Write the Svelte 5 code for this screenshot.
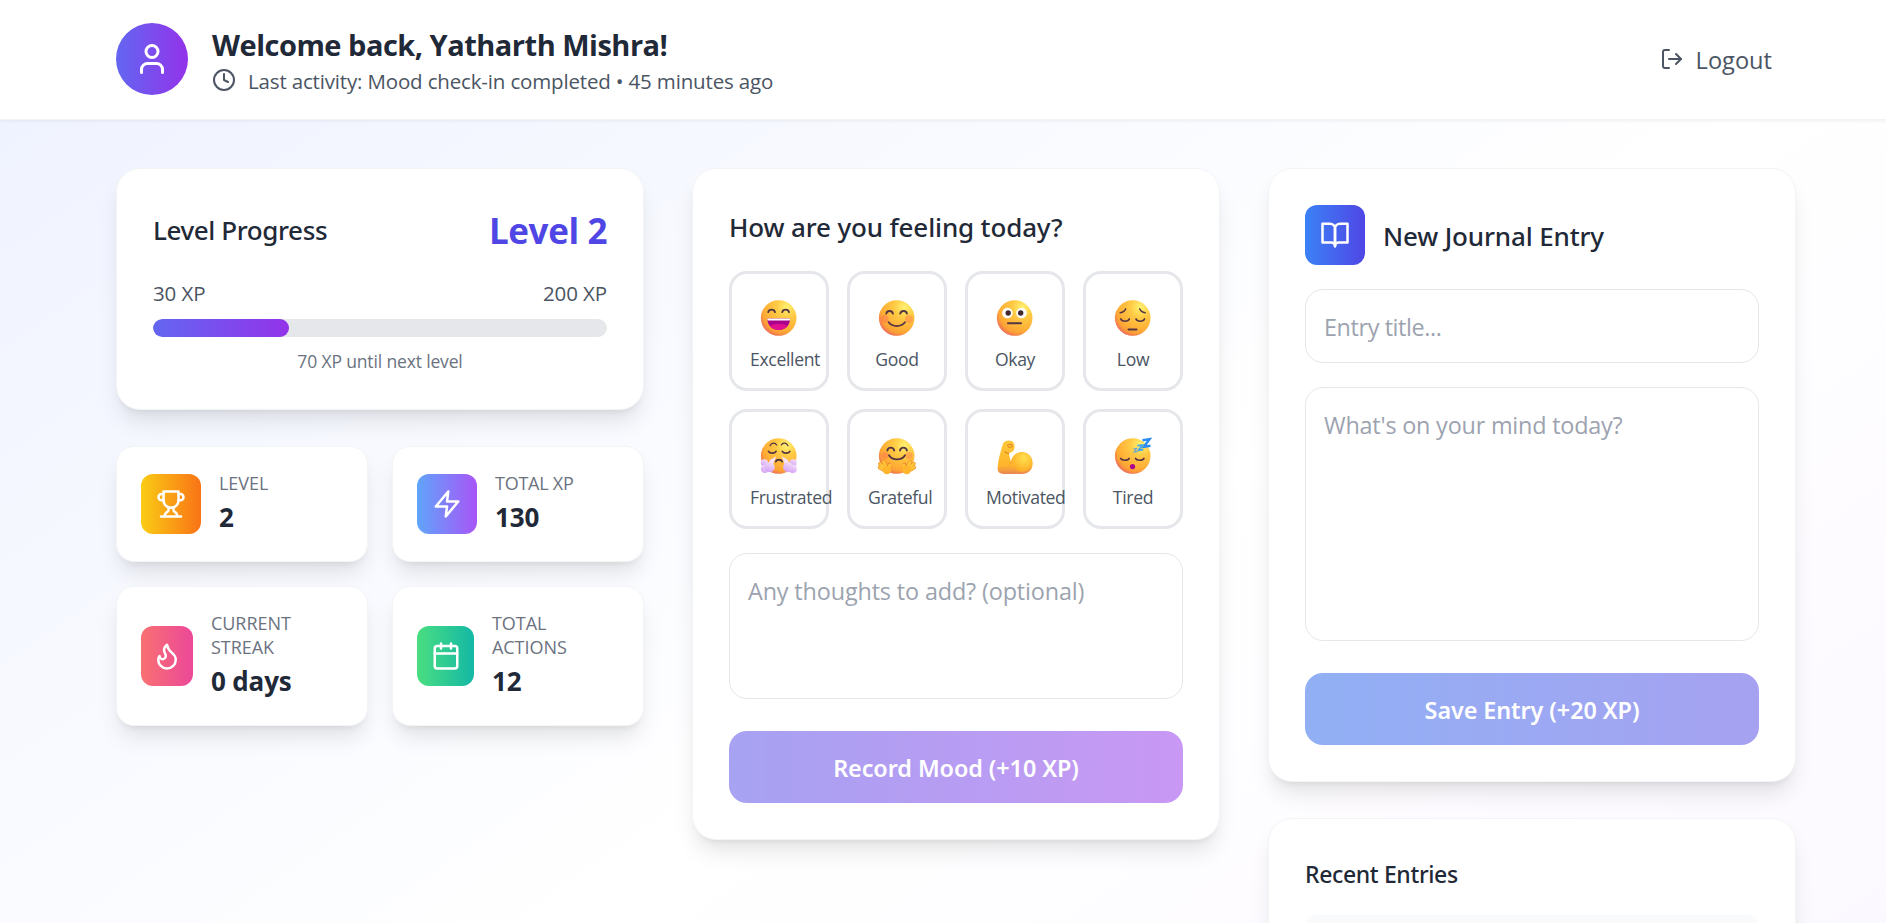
<script>
  const xp = { current: 30, total: 200, remaining: 70, percent: 30 };

  const stats = [
    { key: 'level', label: 'Level', value: '2' },
    { key: 'xp', label: 'Total XP', value: '130' },
    { key: 'streak', label: 'Current Streak', value: '0 days' },
    { key: 'actions', label: 'Total Actions', value: '12' }
  ];

  const moods = ['Excellent', 'Good', 'Okay', 'Low', 'Frustrated', 'Grateful', 'Motivated', 'Tired'];
</script>

{#snippet face()}
  <circle cx="17.7" cy="18" r="17.8" fill="url(#skin)" />
  <circle cx="17.7" cy="18" r="17.8" fill="url(#blush)" />
{/snippet}

{#snippet emoji(name)}
  <svg class="emoji" viewBox="0 0 36 36" fill="none" stroke-linecap="round" stroke-linejoin="round">
    {#if name === 'Excellent'}
      {@render face()}
      <path d="M7.2 12.2c.8-3.4 6-3.4 6.8 0M21.2 12.2c.8-3.4 6-3.4 6.8 0" stroke="#533544" stroke-width="1.8" />
      <path d="M6.3 18.5h22.8c0 15.4-22.8 15.4-22.8 0z" fill="#a8008c" />
      <path d="M9 26c4-3 13-3 17.3 0-4 5.2-13.3 5.2-17.3 0z" fill="#e0108f" />
      <path d="M6.3 18.5h22.8l-.3 2H6.6z" fill="#fff" />
    {:else if name === 'Good'}
      {@render face()}
      <circle cx="5.5" cy="19" r="4" fill="#ff6a56" opacity=".4" />
      <circle cx="30" cy="19" r="4" fill="#ff6a56" opacity=".35" />
      <path d="M7.2 13.7c.8-3.6 6-3.6 6.8 0M21.2 13.7c.8-3.6 6-3.6 6.8 0" stroke="#533544" stroke-width="1.8" />
      <path d="M9.6 22.3c3.6 5 12.7 5 16.4 0" stroke="#533544" stroke-width="1.8" />
    {:else if name === 'Okay'}
      {@render face()}
      <circle cx="10.4" cy="13" r="5.3" fill="#fff" />
      <circle cx="24.5" cy="13" r="5.3" fill="#fff" />
      <circle cx="11.2" cy="13" r="2.7" fill="#402a32" />
      <circle cx="23.7" cy="13" r="2.7" fill="#402a32" />
      <path d="M11 23.3h13" stroke="#533544" stroke-width="2.1" />
    {:else if name === 'Low'}
      {@render face()}
      <path d="M5.2 12.8c2.6-.4 4.8-2 5.5-4M30.2 12.8c-2.6-.4-4.8-2-5.5-4" stroke="#533544" stroke-width="1.4" />
      <path d="M5.8 19c1.2 3 7.3 3 8.5 0M21 19c1.2 3 7.3 3 8.5 0" stroke="#533544" stroke-width="1.7" />
      <path d="M13.5 29.6h8" stroke="#533544" stroke-width="2" />
    {:else if name === 'Frustrated'}
      {@render face()}
      <path d="M9 7.8c1.2-3 5-3.7 6.7-.8M27 7.8c-1.2-3-5-3.7-6.7-.8" stroke="#533544" stroke-width="1.2" />
      <path d="M7.5 13.3c1.2 2.5 6.4 2.5 7.5 0M21.3 13.3c1.2 2.5 6.4 2.5 7.5 0" stroke="#533544" stroke-width="1.7" />
      <path d="M14.8 23.5c.8-2.4 5.4-2.4 6.3 0" stroke="#533544" stroke-width="2" />
      <path d="M15.2 18.3l-6.5 4-1 6 4-1z" fill="#f7e2fd" />
      <path d="M20.7 18.3l6.500 4 1 6-4-1z" fill="#f7e2fd" />
      <g fill="url(#steam)">
        <circle cx="3.4" cy="24.8" r="3.6" /><circle cx="4" cy="30.9" r="4.2" /><circle cx="8.7" cy="29.2" r="5" />
        <circle cx="32.2" cy="24.8" r="3.6" /><circle cx="31.8" cy="30.9" r="4.100" /><circle cx="27.1" cy="29.2" r="5" />
      </g>
    {:else if name === 'Grateful'}
      {@render face()}
      <circle cx="6" cy="17.5" r="3.5" fill="#ff6a56" opacity=".4" />
      <circle cx="30" cy="17.5" r="3.5" fill="#ff6a56" opacity=".35" />
      <path d="M8.3 12.5c.8-3.8 6-3.8 6.900 0M21 12.500c.8-3.800 6-3.800 6.900 0" stroke="#533544" stroke-width="1.900" />
      <path d="M10 17.200c3.500 5.600 12.500 5.600 16 0" stroke="#533544" stroke-width="1.900" />
      <g stroke="#e98a2b" stroke-width="3.800"><path d="M6.500 31L1 25.800M7.500 30L4.500 23.700M9.500 31l.7-4.500M7 33l-6.300-3.500M29.300 31l5.500-5.200M28.300 30l3-6.300M26.300 31l-.7-4.500M28.800 33l6.300-3.500" /></g>
      <g stroke="#ffc238" stroke-width="2.800"><path d="M6.500 31L1 25.800M7.500 30L4.500 23.700M9.500 31l1.300-4M7 33l-6.300-3.500M29.300 31l5.500-5.200M28.300 30l3-6.300M26.300 31l-1.300-4M28.800 33l6.300-3.500" /></g>
      <circle cx="8" cy="32" r="4.300" fill="#ffb52e" /><circle cx="27.800" cy="32" r="4.300" fill="#ffb52e" />
    {:else if name === 'Motivated'}
      <path d="M6 5.500c2-3.500 8.500-4 10.700-.5 2 3 .8 8-2.500 9.300l-2.400 1 2 8.200c1.500-6.200 6-9.300 11.200-9.300 6.500 0 10.700 4.700 10.700 11 0 6.500-4.200 10.800-11.200 10.800H6.500C2.600 36 .4 33.800.6 29.800 1 22 3.700 13.300 6 5.500z" fill="url(#arm)" />
      <circle cx="25" cy="24" r="9.900" fill="url(#bicep)" />
      <path d="M11.800 15.300c-1.500.2-3-.6-3.800-1.700M10.500 7.600c1.700-2 4.500-1.700 4.700.1.100 1.500-2 2-3.800 1.200" stroke="#df8621" stroke-width="1.100" />
      <path d="M14 23.500c-1 3-1.500 5-4 7" stroke="#ed9a2a" stroke-width="1" opacity=".6" />
    {:else}
      {@render face()}
      <path d="M5.700 20.400c1.200 2.400 7.400 2.400 8.500 0M20.500 20.400c1.200 2.400 7.400 2.400 8.500 0" stroke="#533544" stroke-width="1.600" />
      <circle cx="17.500" cy="28.600" r="2.600" fill="#ad0090" />
      <g stroke="#2b8df2" stroke-linecap="butt" stroke-linejoin="miter">
        <path d="M27.500 2.200l7-1-5.500 7.500 6.500-1" stroke-width="2.500" />
        <path d="M22.300 7.700l5-.6-3.800 5.200 4.800-.6" stroke-width="1.800" stroke="#3fa5ef" />
        <path d="M18.300 10.900l3.300-.3-2.400 3.300 3.200-.3" stroke-width="1.300" stroke="#6fa9c9" />
      </g>
    {/if}
  </svg>
{/snippet}

<svg class="defs" width="0" height="0" aria-hidden="true">
  <defs>
    <radialGradient id="skin" cx=".72" cy=".2" r=".95">
      <stop offset="0" stop-color="#fff272" /><stop offset=".3" stop-color="#ffcb45" /><stop offset=".65" stop-color="#ffaf36" /><stop offset="1" stop-color="#f58a35" />
    </radialGradient>
    <radialGradient id="blush" cx=".6" cy=".38" r=".7">
      <stop offset=".76" stop-color="#f4615d" stop-opacity="0" /><stop offset="1" stop-color="#e0568e" stop-opacity=".85" />
    </radialGradient>
    <linearGradient id="steam" x1=".7" y1="0" x2=".3" y2="1">
      <stop offset="0" stop-color="#f3dffb" /><stop offset="1" stop-color="#d4a0f4" />
    </linearGradient>
    <linearGradient id="arm" x1=".5" y1="0" x2=".5" y2="1">
      <stop offset="0" stop-color="#ffc83a" /><stop offset=".75" stop-color="#ffb52c" /><stop offset="1" stop-color="#e98552" />
    </linearGradient>
    <radialGradient id="bicep" cx=".6" cy=".3" r=".75">
      <stop offset="0" stop-color="#ffe04f" /><stop offset=".7" stop-color="#ffb92f" /><stop offset="1" stop-color="#f9a62e" />
    </radialGradient>
  </defs>
</svg>

<div class="page">
  <header>
    <div class="user">
      <div class="avatar">
        <svg class="icon" width="36" height="36" viewBox="0 0 24 24"><path d="M19 21v-2a4 4 0 0 0-4-4H9a4 4 0 0 0-4 4v2" /><circle cx="12" cy="7" r="4" /></svg>
      </div>
      <div>
        <h1>Welcome back, Yatharth Mishra!</h1>
        <div class="activity">
          <svg class="icon" width="24" height="24" viewBox="0 0 24 24"><circle cx="12" cy="12" r="10" /><polyline points="12 6 12 12 16 14" /></svg>
          <span>Last activity: Mood check-in completed • 45 minutes ago</span>
        </div>
      </div>
    </div>
    <button class="logout">
      <svg class="icon" width="24" height="24" viewBox="0 0 24 24"><path d="M9 21H5a2 2 0 0 1-2-2V5a2 2 0 0 1 2-2h4" /><polyline points="16 17 21 12 16 7" /><line x1="21" y1="12" x2="9" y2="12" /></svg>
      <span>Logout</span>
    </button>
  </header>

  <main>
    <div class="column">
      <section class="card">
        <div class="between level-row">
          <h2>Level Progress</h2>
          <strong>Level 2</strong>
        </div>
        <div class="between xp-row"><span>{xp.current} XP</span><span>{xp.total} XP</span></div>
        <div class="bar"><div class="fill" style="width: {xp.percent}%"></div></div>
        <p class="hint">{xp.remaining} XP until next level</p>
      </section>

      <div class="stats">
        {#each stats as stat}
          <section class="stat">
            <div class="tile {stat.key}">
              <svg class="icon" width="30" height="30" viewBox="0 0 24 24">
                {#if stat.key === 'level'}
                  <path d="M6 9H4.500a2.500 2.500 0 0 1 0-5H6" /><path d="M18 9h1.500a2.500 2.500 0 0 0 0-5H18" /><path d="M4 22h16" />
                  <path d="M10 14.660V17c0 .55-.47.98-.97 1.210C7.850 18.750 7 20.240 7 22" /><path d="M14 14.660V17c0 .55.47.98.97 1.210C16.150 18.750 17 20.240 17 22" />
                  <path d="M18 2H6v7a6 6 0 0 0 12 0V2Z" />
                {:else if stat.key === 'xp'}
                  <polygon points="13 2 3 14 12 14 11 22 21 10 12 10 13 2" />
                {:else if stat.key === 'streak'}
                  <path d="M8.500 14.500A2.500 2.500 0 0 0 11 12c0-1.380-.5-2-1-3-1.072-2.143-.224-4.054 2-6 .5 2.500 2 4.900 4 6.500 2 1.600 3 3.500 3 5.500a7 7 0 1 1-14 0c0-1.153.433-2.294 1-3a2.500 2.500 0 0 0 2.500 2.500z" />
                {:else}
                  <rect x="3" y="4" width="18" height="18" rx="2" /><path d="M16 2v4M8 2v4M3 10h18" />
                {/if}
              </svg>
            </div>
            <div>
              <div class="stat-label">{stat.label}</div>
              <div class="stat-value">{stat.value}</div>
            </div>
          </section>
        {/each}
      </div>
    </div>

    <div class="column">
      <section class="card">
        <h2>How are you feeling today?</h2>
        <div class="moods">
          {#each moods as mood}
            <button class="mood">
              {@render emoji(mood)}
              <span>{mood}</span>
            </button>
          {/each}
        </div>
        <textarea class="thoughts" placeholder="Any thoughts to add? (optional)"></textarea>
        <button class="action record">Record Mood (+10 XP)</button>
      </section>
    </div>

    <div class="column">
      <section class="card">
        <div class="journal-head">
          <div class="tile book">
            <svg class="icon" width="30" height="30" viewBox="0 0 24 24"><path d="M2 3h6a4 4 0 0 1 4 4v14a3 3 0 0 0-3-3H2z" /><path d="M22 3h-6a4 4 0 0 0-4 4v14a3 3 0 0 1 3-3h7z" /></svg>
          </div>
          <h2>New Journal Entry</h2>
        </div>
        <input placeholder="Entry title..." />
        <textarea class="body" placeholder="What's on your mind today?"></textarea>
        <button class="action save">Save Entry (+20 XP)</button>
      </section>
      <section class="card">
        <h3>Recent Entries</h3>
        <div class="entry"></div>
      </section>
    </div>
  </main>
</div>

<style>
  :global(body) {
    overflow: hidden;
  }
  * {
    box-sizing: border-box;
  }
  .defs {
    display: block;
    height: 0;
  }
  .page {
    width: 1911px;
    height: 1330px;
    margin-bottom: -407px;
    background: linear-gradient(to bottom right, #eef2ff, #ffffff 50%, #faf5ff);
    font-family: 'Open Sans', 'Noto Sans', sans-serif;
    color: #1f2937;
  }
  :global(#app) {
    height: 923px;
    overflow: hidden;
  }
  h1, h2, h3, p {
    margin: 0;
  }
  button {
    font: inherit;
    color: inherit;
    background: none;
    border: 0;
    padding: 0;
  }
  .icon {
    flex: none;
    display: block;
    fill: none;
    stroke: currentColor;
    stroke-width: 2;
    stroke-linecap: round;
    stroke-linejoin: round;
  }
  header {
    display: flex;
    justify-content: space-between;
    align-items: center;
    height: 120px;
    padding: 0 116px 1px;
    background: #fff;
    border-bottom: 1px solid #f3f4f6;
    box-shadow: 0 1.5px 3px rgba(0, 0, 0, 0.05);
  }
  .user {
    display: flex;
    gap: 24px;
  }
  .avatar {
    width: 72px;
    height: 72px;
    border-radius: 50%;
    display: grid;
    place-items: center;
    color: #fff;
    background: linear-gradient(to right, #6366f1, #9333ea);
  }
  h1 {
    padding-top: 1px;
    font-size: 29px;
    line-height: 42px;
    font-weight: 700;
    letter-spacing: -0.5px;
  }
  .activity {
    display: flex;
    align-items: center;
    gap: 12px;
    height: 30px;
    margin-top: -1px;
    color: #4b5563;
    font-size: 20.5px;
    letter-spacing: -0.16px;
  }
  .activity span {
    padding-top: 2px;
  }
  .logout {
    display: flex;
    align-items: center;
    gap: 12px;
    padding-right: 23px;
    color: #4b5563;
    font-size: 23.6px;
    line-height: 36px;
  }
  .logout span {
    padding-top: 2px;
  }
  main {
    display: grid;
    grid-template-columns: repeat(3, 1fr);
    gap: 48px;
    padding: 48px 115px 0 116px;
  }
  .column {
    display: flex;
    flex-direction: column;
    gap: 36px;
    min-width: 0;
  }
  .card, .stat {
    background: #fff;
    border: 1px solid #f3f4f6;
    box-shadow: 0 15px 22.5px -4.5px rgba(0, 0, 0, 0.1), 0 6px 9px -6px rgba(0, 0, 0, 0.1);
  }
  .card {
    padding: 36px;
    border-radius: 24px;
  }
  h2 {
    padding-top: 1px;
    margin-bottom: -1px;
    font-family: 'Noto Sans', 'Open Sans', sans-serif;
    font-size: 26px;
    line-height: 42px;
    font-weight: 540;
    letter-spacing: -0.15px;
  }
  .between {
    display: flex;
    justify-content: space-between;
    align-items: center;
  }
  .level-row {
    height: 48px;
  }
  .level-row h2 {
    letter-spacing: -0.4px;
  }
  strong {
    padding-top: 4px;
    font-size: 35px;
    line-height: 48px;
    font-weight: 700;
    letter-spacing: -0.4px;
    color: #4f46e5;
  }
  .xp-row {
    margin: 24px 0 12px;
    padding-top: 1px;
    height: 30px;
    font-size: 20.5px;
    letter-spacing: -0.1px;
    color: #4b5563;
  }
  .bar {
    height: 18px;
    border-radius: 9px;
    background: #e5e7eb;
    overflow: hidden;
  }
  .fill {
    height: 100%;
    border-radius: 9px;
    background: linear-gradient(to right, #6366f1, #9333ea);
  }
  .hint {
    margin-top: 12px;
    text-align: center;
    font-size: 17.5px;
    line-height: 24px;
    letter-spacing: -0.15px;
    color: #6b7280;
  }
  .stats {
    display: grid;
    grid-template-columns: 1fr 1fr;
    gap: 24px;
  }
  .stat {
    display: flex;
    align-items: center;
    gap: 18px;
    padding: 24px;
    border-radius: 18px;
  }
  .stat-label {
    width: min-content;
    text-transform: uppercase;
    font-size: 18px;
    line-height: 24px;
    letter-spacing: -0.05px;
    color: #6b7280;
  }
  .stat:nth-child(2) .stat-label {
    width: auto;
    letter-spacing: -0.25px;
  }
  .stat-value {
    padding-top: 1px;
    margin-bottom: -1px;
    font-size: 26px;
    line-height: 42px;
    font-weight: 700;
    letter-spacing: -0.15px;
  }
  .tile {
    flex: none;
    width: 60px;
    height: 60px;
    border-radius: 12px;
    display: grid;
    place-items: center;
    color: #fff;
  }
  .tile.level { background: linear-gradient(to right, #facc15, #f97316); }
  .tile.xp { background: linear-gradient(to right, #60a5fa, #a855f7); }
  .tile.streak { width: 52px; background: linear-gradient(to right, #f87171, #ec4899); }
  .tile.actions { width: 57px; background: linear-gradient(to right, #4ade80, #14b8a6); }
  .tile.book { background: linear-gradient(to right, #3b82f6, #4f46e5); }
  .moods {
    display: grid;
    grid-template-columns: repeat(4, minmax(0, 1fr));
    gap: 18px;
    margin: 24px 0;
  }
  .mood {
    display: flex;
    flex-direction: column;
    align-items: center;
    height: 120px;
    padding: 26px 18px 0;
    border: 3px solid #e5e7eb;
    border-radius: 18px;
  }
  .mood span {
    min-width: 0;
    max-width: 100%;
    margin-top: 11px;
    font-size: 17.6px;
    line-height: 24px;
    letter-spacing: -0.34px;
    white-space: nowrap;
    color: #4b5563;
  }
  .emoji {
    flex: none;
    display: block;
    width: 36px;
    height: 36px;
    overflow: visible;
  }
  input, textarea {
    display: block;
    width: 100%;
    padding: 19px 18px 17px;
    border: 1px solid #e5e7eb;
    border-radius: 18px;
    background: #fff;
    font: 23.4px/36px 'Open Sans', sans-serif;
    letter-spacing: -0.14px;
    resize: none;
    outline: none;
  }
  input::placeholder, textarea::placeholder {
    color: #9ca3af;
  }
  input {
    height: 74px;
    margin: 24px 0;
    letter-spacing: -0.4px;
  }
  .thoughts {
    height: 146px;
  }
  .body {
    height: 254px;
    letter-spacing: -0.2px;
  }
  .action {
    display: block;
    width: 100%;
    height: 72px;
    margin-top: 32px;
    padding-top: 1px;
    border-radius: 18px;
    color: #fff;
    font-family: 'Noto Sans', sans-serif;
    font-size: 23.4px;
    font-weight: 600;
    letter-spacing: -0.08px;
    opacity: 0.5;
  }
  .record { background: linear-gradient(to right, #4f46e5, #9333ea); }
  .save { background: linear-gradient(to right, #2563eb, #4f46e5); }
  .journal-head {
    display: flex;
    align-items: center;
    gap: 18px;
  }
  h3 {
    padding-top: 1px;
    font-family: 'Noto Sans', sans-serif;
    font-size: 23px;
    line-height: 36px;
    font-weight: 540;
    letter-spacing: -0.36px;
  }
  .entry {
    height: 150px;
    margin-top: 23px;
    border-radius: 12px;
    background: #f9fafb;
  }
</style>
